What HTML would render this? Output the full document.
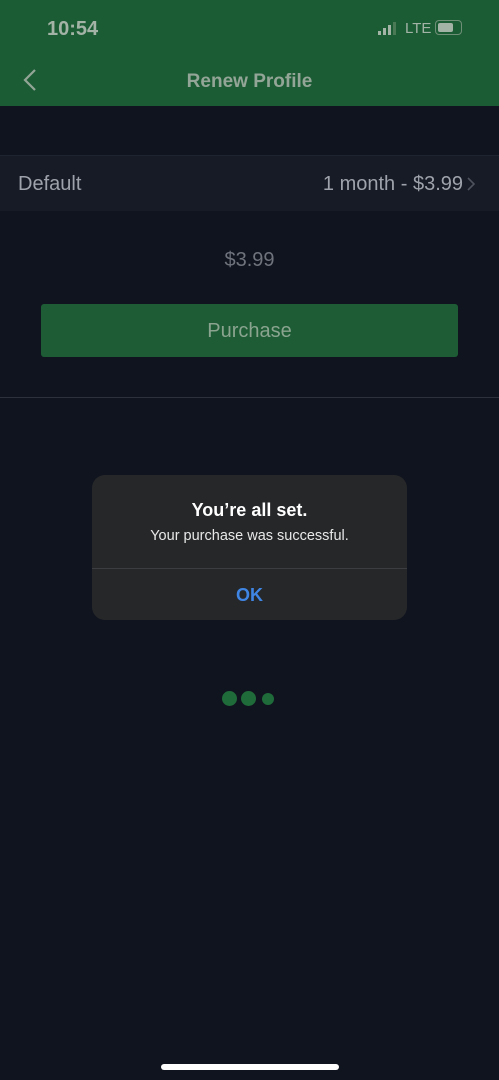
<!DOCTYPE html>
<html><head><meta charset="utf-8"><style>
*{margin:0;padding:0;box-sizing:border-box}
body{width:499px;height:1080px;background:#10141e;font-family:"Liberation Sans",sans-serif;position:relative;overflow:hidden}
.hdr{position:absolute;left:0;top:0;width:499px;height:106px;background:#1c5c35}
.time{position:absolute;left:47px;top:18px;font-size:20px;color:#a3b3a6;font-weight:bold}
.title{position:absolute;left:0;width:499px;top:71px;text-align:center;font-size:19px;color:#93a596;font-weight:bold}
.row{position:absolute;left:0;top:155px;width:499px;height:56px;background:#161b26;border-top:1px solid #1e2430}
.row .l{position:absolute;left:18px;top:17px;font-size:20px;color:#9ea2aa}
.row .r{position:absolute;right:36px;top:17px;font-size:20px;color:#9ea2aa}
.price{position:absolute;left:0;width:499px;top:249px;text-align:center;font-size:20px;color:#6e737c}
.btn{position:absolute;left:41px;top:304px;width:417px;height:53px;background:#1d5c35;border-radius:3px;text-align:center;line-height:55px;font-size:20px;color:#8aa48f}
.sep{position:absolute;left:0;top:397px;width:499px;height:1px;background:#2c313b}
.alert{position:absolute;left:92px;top:475px;width:315px;height:145px;background:#262729;border-radius:13px}
.alert .t{position:absolute;top:25px;width:100%;text-align:center;color:#fff;font-size:18px;font-weight:bold}
.alert .s{position:absolute;top:53px;width:100%;text-align:center;color:#e8e8e8;font-size:14.5px}
.alert .d{position:absolute;top:93px;width:100%;height:1px;background:#3c3d40}
.alert .ok{position:absolute;top:110px;width:100%;text-align:center;color:#3f86e4;font-size:18px;font-weight:bold}
.dot{position:absolute;border-radius:50%;background:#1f6b3a}
.home{position:absolute;left:161px;top:1064px;width:178px;height:6px;border-radius:3px;background:#fff}
</style></head><body>
<div class="hdr">
<div class="time">10:54</div>
<div style="position:absolute;left:378px;top:31px;width:3px;height:4px;background:#a3b3a6"></div>
<div style="position:absolute;left:383px;top:28px;width:3px;height:7px;background:#a3b3a6"></div>
<div style="position:absolute;left:388px;top:25px;width:3px;height:10px;background:#a3b3a6"></div>
<div style="position:absolute;left:393px;top:22px;width:3px;height:13px;background:#4a7a55"></div>
<div style="position:absolute;left:405px;top:20px;font-size:15px;color:#a3b3a6">LTE</div>
<div style="position:absolute;left:435px;top:20px;width:27px;height:15px;border:1.5px solid #6f8f76;border-radius:4px"><div style="position:absolute;left:1.5px;top:1.5px;width:15px;height:9px;background:#a3b3a6;border-radius:2px"></div></div>
<svg style="position:absolute;left:22px;top:68px" width="16" height="24"><path d="M13 2 L3 12 L13 22" stroke="#93a596" stroke-width="2.2" fill="none"/></svg>
<div class="title">Renew Profile</div>
</div>
<div class="row"><div class="l">Default</div><div class="r">1 month - $3.99</div>
<svg style="position:absolute;left:466px;top:20px" width="10" height="16"><path d="M2 2 L8 8 L2 14" stroke="#4d525c" stroke-width="1.6" fill="none"/></svg></div>
<div class="price">$3.99</div>
<div class="btn">Purchase</div>
<div class="sep"></div>
<div class="alert"><div class="t">You’re all set.</div><div class="s">Your purchase was successful.</div><div class="d"></div><div class="ok">OK</div></div>
<div class="dot" style="left:222px;top:691px;width:15px;height:15px"></div>
<div class="dot" style="left:241px;top:691px;width:15px;height:15px"></div>
<div class="dot" style="left:262px;top:693px;width:12px;height:12px"></div>
<div class="home"></div>
</body></html>
